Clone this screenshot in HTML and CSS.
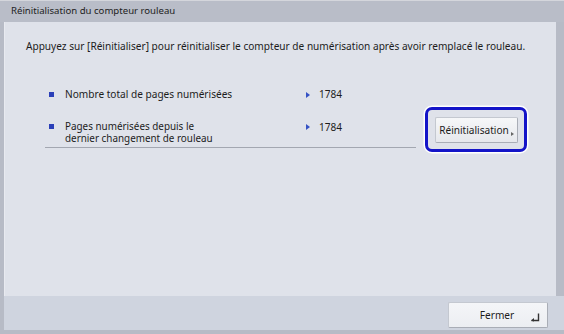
FILE: index.html
```html
<!DOCTYPE html>
<html lang="fr">
<head>
<meta charset="utf-8">
<link rel="stylesheet" href="styles.css">
</head>
<body>
<div class="screen">
  <div class="titlebar">Réinitialisation du compteur rouleau</div>
  <div class="panel">
    <p class="intro">Appuyez sur [Réinitialiser] pour réinitialiser le compteur de numérisation après avoir remplacé le rouleau.</p>
    <div class="rows">
      <div class="row row1">
        <span class="bullet"></span>
        <span class="label">Nombre total de pages numérisées</span>
        <span class="arrow"></span>
        <span class="value">1784</span>
      </div>
      <div class="row row2">
        <span class="bullet"></span>
        <span class="label"><span class="ln">Pages numérisées depuis le</span><span class="ln">dernier changement de rouleau</span></span>
        <span class="arrow"></span>
        <span class="value">1784</span>
        <div class="focus">
          <button class="btn reset">Réinitialisation<span class="tri"></span></button>
        </div>
      </div>
    </div>
  </div>
  <div class="footer">
    <button class="btn close">Fermer<svg class="ret" width="10" height="9" viewBox="0 0 10 9"><path d="M8.5 0.5 V7.5 H1.5" fill="none" stroke="#333" stroke-width="1.4"/><path d="M1 7.5 L4 5 V8.5 Z" fill="#333"/></svg></button>
  </div>
</div>
</body>
</html>
```

FILE: styles.css
```css
html, body {
  margin: 0;
  padding: 0;
}
body {
  width: 564px;
  height: 334px;
  overflow: hidden;
  font-family: "Noto Sans", "Open Sans", sans-serif;
  color: #1c1c1c;
}
.screen {
  width: 564px;
  height: 334px;
  background: #b7bbc6;
  display: flex;
  flex-direction: column;
  box-sizing: border-box;
  border-top: 1px solid #d4d6dc;
}
.titlebar {
  height: 21px;
  line-height: 20px;
  padding-left: 11px;
  font-size: 9.6px;
  color: #222;
  background: #b9bdc8;
}
.panel {
  margin-left: 4px;
  margin-right: 8px;
  height: 274px;
  background: #dfe2ea;
  border-left: 1px solid #e8eaf0;
  box-sizing: border-box;
}
.intro {
  margin: 17px 0 0 21px;
  font-size: 10.1px;
  line-height: 14px;
  white-space: nowrap;
}
.rows {
  margin: 36px 0 0 40px;
  width: 371px;
  border-bottom: 1px solid #a3a7b1;
}
.row {
  display: flex;
  align-items: flex-start;
  font-size: 10.1px;
  line-height: 11px;
  position: relative;
}
.row1 {
  height: 32px;
}
.row2 {
  height: 26px;
}
.row2 .label {
  display: flex;
  flex-direction: column;
  margin-top: -1px;
}
.ln {
  display: block;
  font-size: 9.9px;
  line-height: 12px;
  height: 12px;
}
.bullet {
  width: 5px;
  height: 5px;
  background: #2a3fb8;
  margin: 3px 11px 0 4px;
  flex: none;
}
.label {
  width: 241px;
  flex: none;
}
.arrow {
  width: 0;
  height: 0;
  border-left: 4px solid #3552c4;
  border-top: 3px solid transparent;
  border-bottom: 3px solid transparent;
  margin: 3px 9px 0 0;
  flex: none;
}
.value {
  flex: none;
}
.row2 .value {
  margin-top: 1px;
}
.focus {
  position: absolute;
  left: 380px;
  top: -14px;
  width: 96px;
  height: 39px;
  border: 3px solid #1414c8;
  border-radius: 7px;
  box-shadow: 0 0 0 1.5px #ffffff;
  display: flex;
  align-items: center;
  justify-content: center;
  background: #dfe2ea;
}
.btn {
  font-family: "Noto Sans", "Open Sans", sans-serif;
  font-size: 10.1px;
  color: #1c1c1c;
  border: 1px solid #c4c8d0;
  border-bottom-color: #a9adb6;
  border-right-color: #a9adb6;
  border-radius: 2px;
  background: linear-gradient(#f6f7f9, #e6e8ed);
  padding: 0;
  position: relative;
}
.reset {
  width: 83px;
  height: 26px;
  margin-left: 1px;
  margin-top: 1px;
  padding-right: 5px;
}
.tri {
  position: absolute;
  right: 3px;
  bottom: 6px;
  width: 0;
  height: 0;
  border-left: 3px solid #666;
  border-top: 2.5px solid transparent;
  border-bottom: 2.5px solid transparent;
}
.footer {
  margin-left: 4px;
  height: 34px;
  background: #cfd4df;
  display: flex;
  justify-content: flex-end;
  align-items: flex-start;
  padding-right: 16px;
  border-bottom: 4px solid #b7bbc6;
  box-sizing: content-box;
}
.close {
  margin-top: 6px;
  width: 100px;
  height: 26px;
  background: linear-gradient(#f4f5f8, #eceef2);
  padding-right: 2px;
}
.ret {
  position: absolute;
  right: 7px;
  bottom: 5px;
}
```
